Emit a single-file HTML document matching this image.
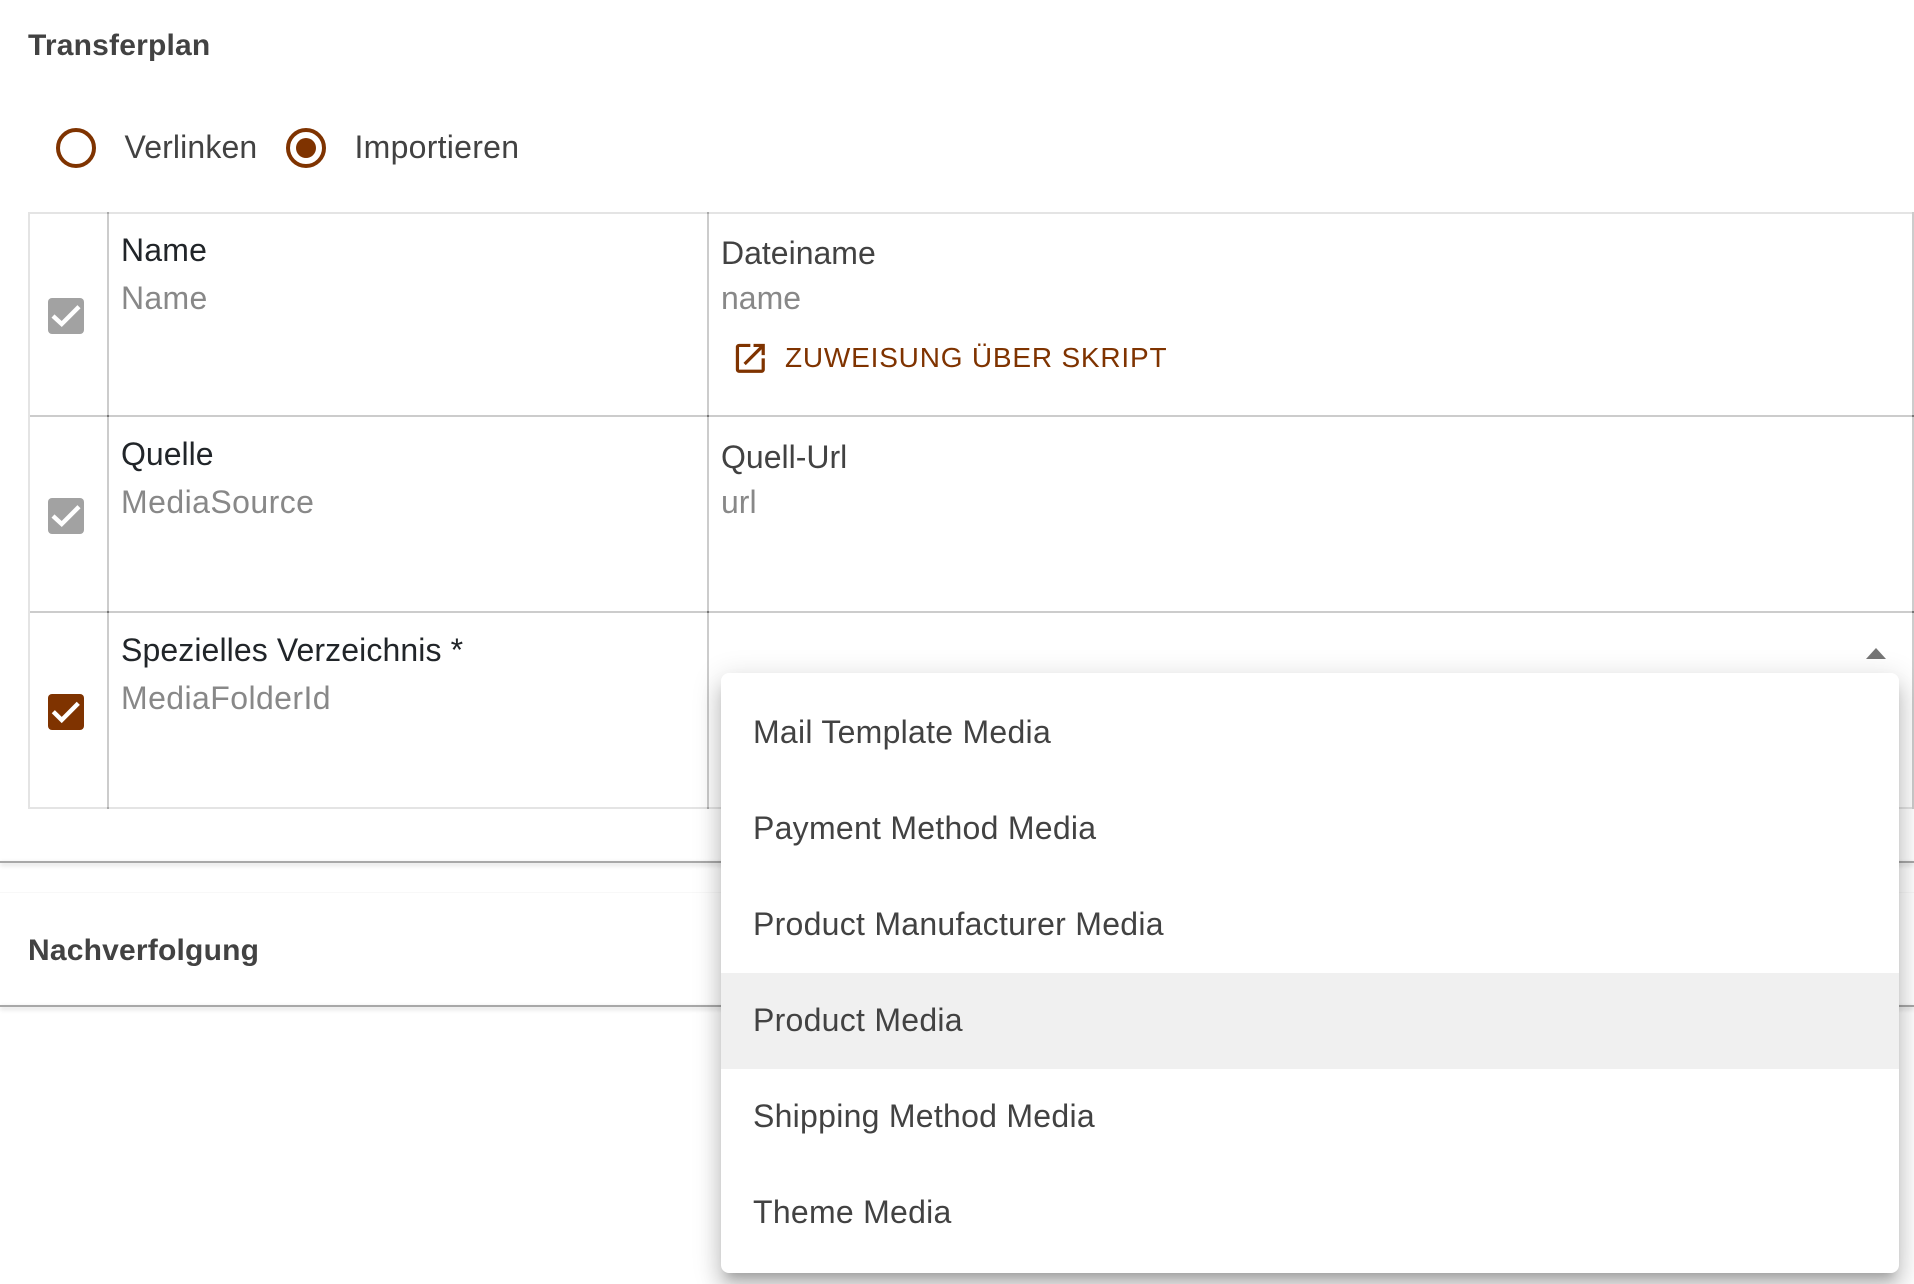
<!DOCTYPE html>
<html lang="de"><head><meta charset="utf-8"><title>Transferplan</title>
<style>
html,body{margin:0;padding:0;background:#fff;width:1914px;height:1284px;overflow:hidden}
body{position:relative;font-family:"Liberation Sans",Arial,sans-serif;color:#424242}
.t{position:absolute;white-space:nowrap;font-size:32px;line-height:40px;height:40px}
.d{color:#212529}.g{color:#888}
.b{font-weight:700;font-size:30px;letter-spacing:.2px}
.l{position:absolute;background:#ccc}
.o{background:#e4e4e4}
.x{position:absolute;width:2px;height:2px;background:#777}
.cb{position:absolute;left:48px;width:36px;height:36px;border-radius:4px;background:#a2a2a2}
.cb svg{position:absolute;left:0;top:0}
.r{position:absolute;top:128px;width:40px;height:40px;box-sizing:border-box;border:4px solid #7f3300;border-radius:50%}
.r i{position:absolute;left:6px;top:6px;width:20px;height:20px;border-radius:50%;background:#7f3300}
.menu{position:absolute;left:721px;top:673px;width:1178px;height:600px;background:#fff;border-radius:8px;box-shadow:0 10px 10px -6px rgba(0,0,0,.2),0 16px 20px 2px rgba(0,0,0,.14),0 6px 28px 4px rgba(0,0,0,.12);overflow:hidden}
.menu div{position:absolute;left:0;right:0;height:96px;line-height:96px;padding-left:32px;font-size:32px;letter-spacing:.27px;color:#424242}
.sec{position:absolute;left:0;right:0;height:2px;background:#a8a8a8;box-shadow:0 2px 5px rgba(0,0,0,.2)}
</style></head><body>
<div class="t b" style="left:28px;top:26px">Transferplan</div>

<div class="r" style="left:56px"></div>
<div class="t" style="left:124.500px;top:127px;letter-spacing:.13px">Verlinken</div>
<div class="r" style="left:286px"><i></i></div>
<div class="t" style="left:354.500px;top:127px;letter-spacing:.27px">Importieren</div>

<!-- table lines -->
<div class="l o" style="left:28px;top:212px;width:1886px;height:2px"></div>
<div class="l" style="left:28px;top:415px;width:1886px;height:2px"></div>
<div class="l" style="left:28px;top:611px;width:1886px;height:2px"></div>
<div class="l o" style="left:28px;top:807px;width:1886px;height:2px"></div>
<div class="l o" style="left:28px;top:212px;width:2px;height:597px"></div>
<div class="l" style="left:107px;top:212px;width:2px;height:597px"></div>
<div class="l" style="left:707px;top:212px;width:2px;height:597px"></div>
<div class="l" style="left:1912px;top:212px;width:2px;height:597px"></div>
<div class="x" style="left:107px;top:415px"></div>
<div class="x" style="left:707px;top:415px"></div>
<div class="x" style="left:1912px;top:415px"></div>
<div class="x" style="left:107px;top:611px"></div>
<div class="x" style="left:707px;top:611px"></div>
<div class="x" style="left:1912px;top:611px"></div>
<div class="x" style="left:107px;top:212px;background:#aaa"></div>
<div class="x" style="left:707px;top:212px;background:#aaa"></div>
<div class="x" style="left:107px;top:807px;background:#aaa"></div>
<div class="x" style="left:707px;top:807px;background:#aaa"></div>

<!-- row 1 -->
<div class="cb" style="top:298px"><svg width="36" height="36" viewBox="0 0 36 36"><path d="M5 18L13.700 26L31 8.700" fill="none" stroke="#fff" stroke-width="4.400"/></svg></div>
<div class="t d" style="left:121px;top:230px;letter-spacing:.2px">Name</div>
<div class="t g" style="left:121px;top:278px;letter-spacing:.3px">Name</div>
<div class="t" style="left:721px;top:233px">Dateiname</div>
<div class="t g" style="left:721px;top:278px">name</div>
<svg style="position:absolute;left:731px;top:338.500px" width="38.670" height="38.670" viewBox="0 0 24 24"><path d="M19 19H5V5h7V3H5a2 2 0 0 0-2 2v14a2 2 0 0 0 2 2h14c1.100 0 2-.9 2-2v-7h-2v7zM14 3v2h3.590l-9.830 9.830 1.410 1.410L19 6.410V10h2V3h-7z" fill="#7f3300"/></svg>
<div class="t" style="left:785px;top:338px;font-size:28px;letter-spacing:.8px;color:#7f3300">ZUWEISUNG ÜBER SKRIPT</div>

<!-- row 2 -->
<div class="cb" style="top:498px"><svg width="36" height="36" viewBox="0 0 36 36"><path d="M5 18L13.700 26L31 8.700" fill="none" stroke="#fff" stroke-width="4.400"/></svg></div>
<div class="t d" style="left:121px;top:434px">Quelle</div>
<div class="t g" style="left:121px;top:482px;letter-spacing:.44px">MediaSource</div>
<div class="t" style="left:721px;top:437px">Quell-Url</div>
<div class="t g" style="left:721px;top:482px">url</div>

<!-- row 3 -->
<div class="cb" style="top:694px;background:#7f3300"><svg width="36" height="36" viewBox="0 0 36 36"><path d="M5.300 17.700L13.700 26L30.300 9.300" fill="none" stroke="#fff" stroke-width="4.400"/></svg></div>
<div class="t d" style="left:121px;top:630px;letter-spacing:.1px">Spezielles Verzeichnis *</div>
<div class="t g" style="left:121px;top:678px;letter-spacing:.42px">MediaFolderId</div>
<svg style="position:absolute;left:1866px;top:647px" width="20" height="12" viewBox="0 0 20 12"><path d="M0 12L10 1L20 12Z" fill="#757575"/></svg>

<!-- sections -->
<div class="sec" style="top:861px"></div>
<div style="position:absolute;left:0;right:0;top:892px;height:1px;background:#f8f8f8"></div>
<div class="t b" style="left:28px;top:931px">Nachverfolgung</div>
<div class="sec" style="top:1005px"></div>

<!-- menu -->
<div class="menu">
<div style="top:11px">Mail Template Media</div>
<div style="top:107px">Payment Method Media</div>
<div style="top:203px">Product Manufacturer Media</div>
<div style="top:300px;background:#f0f0f0;line-height:95px">Product Media</div>
<div style="top:395px;height:96px;line-height:97px">Shipping Method Media</div>
<div style="top:491px;line-height:97px">Theme Media</div>
</div>
</body></html>
